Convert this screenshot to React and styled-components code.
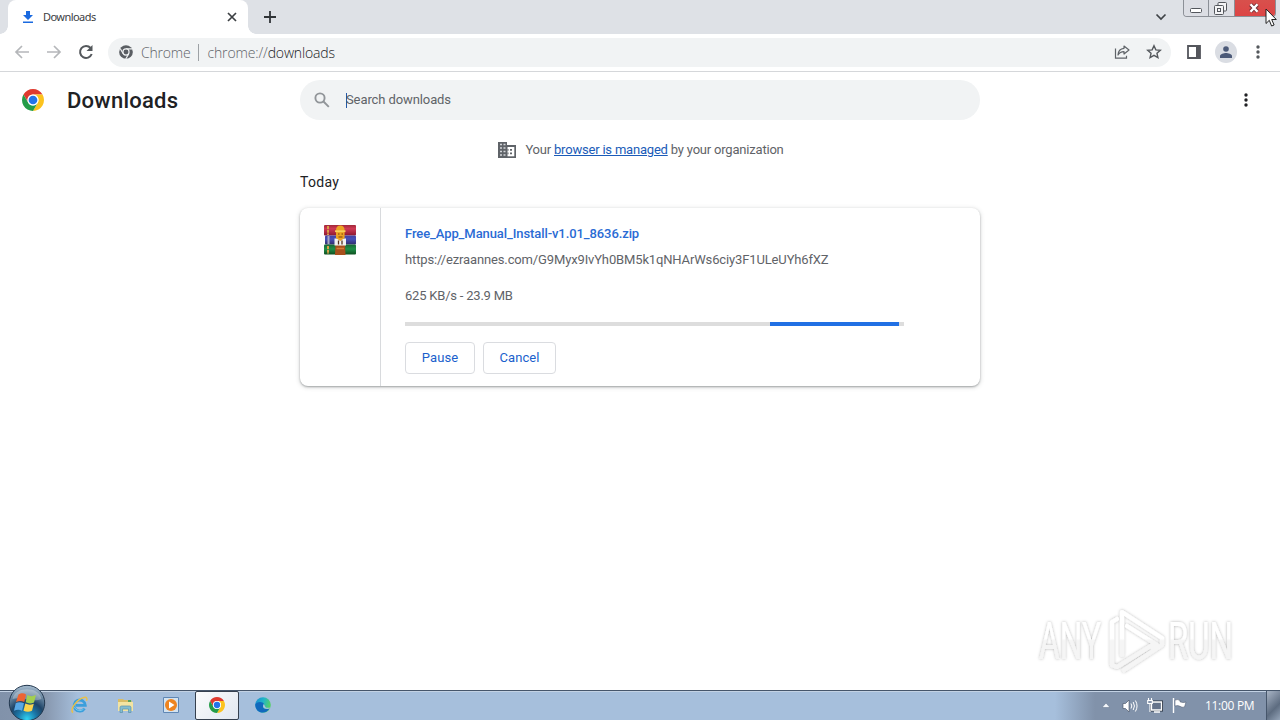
import React from "react";
import styled, { createGlobalStyle, css } from "styled-components";

const GlobalStyle = createGlobalStyle`
  * {
    box-sizing: border-box;
  }
  body {
    margin: 0;
    background: #fff;
    overflow: hidden;
    font-family: Roboto, sans-serif;
  }
  svg {
    display: block;
    flex: none;
  }
  p, h1, h2 {
    margin: 0;
  }
`;

const ChromeLogo = ({ size }) => (
  <svg width={size} height={size} viewBox="0 0 48 48">
    <path fill="#df3a2f" d="M3.22 12A24 24 0 0 1 44.78 12H24A12 12 0 0 0 13.61 30Z" />
    <path fill="#fcc31e" d="M44.78 12A24 24 0 0 1 24 48L34.39 30A12 12 0 0 0 24 12Z" />
    <path fill="#249c48" d="M24 48A24 24 0 0 1 3.22 12L13.61 30A12 12 0 0 0 34.39 30Z" />
    <circle cx="24" cy="24" r="12" fill="#fff" />
    <circle cx="24" cy="24" r="9.5" fill="#2474e8" />
  </svg>
);

const ChromeMono = () => (
  <svg width="14" height="14" viewBox="0 0 48 48">
    <circle cx="24" cy="24" r="23.5" fill="#5a5e63" />
    <path d="M24 13H46M14.5 30L4 12M33.5 30L23 48" stroke="#f1f3f4" strokeWidth="4" />
    <circle cx="24" cy="24" r="12.5" fill="#f1f3f4" />
    <circle cx="24" cy="24" r="8.5" fill="#5a5e63" />
  </svg>
);

const Dots = ({ color }) => (
  <svg width="6" height="16" viewBox="0 0 6 16" fill={color}>
    <circle cx="3" cy="3" r="1.7" />
    <circle cx="3" cy="8" r="1.7" />
    <circle cx="3" cy="13" r="1.7" />
  </svg>
);

const WinRarIcon = () => (
  <svg width="32" height="32" viewBox="0 0 32 32">
    <defs>
      <linearGradient id="red" x2="0" y2="1">
        <stop offset="0" stopColor="#a02838" />
        <stop offset=".35" stopColor="#d03a55" />
        <stop offset="1" stopColor="#8c1830" />
      </linearGradient>
      <linearGradient id="blue" x2="0" y2="1">
        <stop offset="0" stopColor="#4341a0" />
        <stop offset=".4" stopColor="#4650b8" />
        <stop offset="1" stopColor="#302c6c" />
      </linearGradient>
      <linearGradient id="green" x2="0" y2="1">
        <stop offset="0" stopColor="#186634" />
        <stop offset=".45" stopColor="#1f8f48" />
        <stop offset="1" stopColor="#0f5020" />
      </linearGradient>
    </defs>
    <rect y="1" width="32" height="10.5" rx="1" fill="url(#red)" />
    <rect x="1" y="11.5" width="31" height="9" rx="1" fill="url(#blue)" />
    <rect y="20.5" width="32" height="10" rx="1" fill="url(#green)" />
    <path d="M4 2V11M4 22V30" stroke="#d9a048" strokeWidth="2" strokeDasharray="3 .7" />
    <path d="M4.5 12V20" stroke="#a8a8c4" strokeWidth="2" />
    <path d="M11.500 20h9.500l.5 11h-10.500z" fill="#a8501d" />
    <path d="M10.500 14.500h11.500v7H10.500z" fill="#f2f2f2" />
    <path d="M12 14V6.500q0-5 4.300-5t4.300 5V14l-4.300 3z" fill="#eba323" />
    <path d="M11 7.200h10.500" stroke="#f8cf58" strokeWidth="1.800" />
    <path d="M14 10h1.500M17.500 10h1.500M14.500 13h4" stroke="#7a3c0a" strokeWidth="1" />
    <path d="M14.500 16.500v4M18 16.500v4" stroke="#55301c" strokeWidth="1.300" />
    <path d="M12.500 24.500h7.500" stroke="#d77c37" strokeWidth="1.500" />
  </svg>
);

const ShareIcon = () => (
  <svg width="16" height="16" viewBox="0 0 16 16" fill="none" stroke="#5f6368" strokeWidth="1.2">
    <path d="M1.500 4.500v9.700h11v-2.500" />
    <path d="M10 2l5 4-5 4V7.700C7.500 7.700 5.300 8.700 4 11 4.200 7.500 6 4.600 10 4.300z" strokeLinejoin="round" />
  </svg>
);

const BuildingIcon = () => (
  <svg width="18" height="16" viewBox="0 0 18 16">
    <path d="M0 0h9v3h9v13H0z" fill="#5f6368" />
    <path d="M2 2.500h2M5.500 2.500h2M2 6h2M5.500 6h2M2 9.500h2M5.500 9.500h2M2 13h2M5.500 13h2" stroke="#d4d6d9" strokeWidth="1.300" />
    <path d="M9.500 5h6.800v9.300H9.500z" fill="#fff" />
    <path d="M12 7h2v1.700h-2zM12 10.500h2v1.700h-2zM9.500 7h1v1.700h-1zM9.500 10.500h1v1.700h-1z" fill="#5f6368" />
  </svg>
);

const IeIcon = () => (
  <svg width="19" height="18" viewBox="0 0 19 18" fill="none">
    <path d="M14.500 12.500A5.600 5.600 0 1 1 15.300 9.300H6" stroke="#3b9fdc" strokeWidth="2.800" />
    <path d="M13.500 13A5.500 5.500 0 0 1 4.500 11" stroke="#7bccee" strokeWidth="1" />
    <path d="M3 16.500C-1 14 7 3 14 1.500c3-.600 3.500 1 2.500 3.200" stroke="#e8c04a" strokeWidth="1.500" />
  </svg>
);

const ExplorerIcon = () => (
  <svg width="17" height="17" viewBox="0 0 17 17">
    <path d="M1 4V2h5l1 1h7l1 2v9H1z" fill="#d9bd66" />
    <path d="M1 5h15v9H1z" fill="#f3e4a2" />
    <path d="M11 3h3v2h-3z" fill="#55a45f" />
    <path d="M3 15.500V10.500q0-1.500 1.500-1.500h8q1.500 0 1.500 1.500v5h-2.500V12h-6v3.500z" fill="#83bdcf" stroke="#5a91aa" strokeWidth=".7" />
  </svg>
);

const PlayerIcon = () => (
  <svg width="16" height="16" viewBox="0 0 16 16">
    <path d="M.5.5h15v15H.5z" fill="#d4e3f0" stroke="#5f87b5" />
    <circle cx="8" cy="8" r="6" fill="#ee8420" />
    <path d="M6 4.500L11.500 8 6 11.500z" fill="#fff" />
  </svg>
);

const EdgeIcon = () => (
  <svg width="16" height="16" viewBox="0 0 16 16">
    <defs>
      <linearGradient id="edge" x2="1" y2=".3">
        <stop offset="0" stopColor="#1a8ad2" />
        <stop offset=".55" stopColor="#22b5c8" />
        <stop offset="1" stopColor="#55cf68" />
      </linearGradient>
    </defs>
    <circle cx="8" cy="8" r="7.800" fill="url(#edge)" />
    <path d="M.3 7.500C1 4.500 8.500 4 9 7.500c.2 1-1.500 1.500-.8 3 .7 1.600 4 2 6.300.8C12 17.500.5 17.500.3 7.500z" fill="#1169bd" />
    <path d="M8.800 7c-1 1-1.300 3.500 1 4.500 1.800.7 3.800.4 5 0l.7-1c-3 .8-5.300.3-5.600-1.500z" fill="#a9c1dd" />
  </svg>
);

const StartOrb = () => (
  <svg width="38" height="38" viewBox="0 0 38 38">
    <defs>
      <radialGradient id="orb" cx=".5" cy=".95" r=".9">
        <stop offset="0" stopColor="#2fd3f3" />
        <stop offset=".3" stopColor="#1b77a8" />
        <stop offset=".55" stopColor="#1e4468" />
        <stop offset="1" stopColor="#9db4c8" />
      </radialGradient>
    </defs>
    <circle cx="19" cy="19" r="17.700" fill="url(#orb)" stroke="#23384f" strokeWidth="1" />
    <path d="M4.500 15C7 2 31 2 33.500 15 24 19 14 12 4.500 15z" fill="#fff" opacity=".3" />
    <path d="M10.500 10.500c3-2 5.500-1.500 7.500 0L16.300 18c-3-1.500-5.300-1.400-8.300 0z" fill="#ee6432" />
    <path d="M19.300 11c3 1.500 5.500 1.500 8.700 0l-2 7.500c-3 1.300-5.500 1.200-8.300-.200z" fill="#a3cf50" />
    <path d="M7.700 19.300c3-1.500 5.500-1.300 8.300 0l-2 7.500c-2.700-1.500-5-1.400-8 0z" fill="#58a7e5" />
    <path d="M17.300 19.600c3 1.400 5.300 1.500 8.500.1L24 26.800c-3 1.500-5.700 1.300-8.500-.100z" fill="#fbd34b" />
  </svg>
);

const Watermark = () => (
  <svg width="240" height="76" viewBox="0 0 240 76">
    <defs>
      <linearGradient id="wm" x2="0" y2="76" gradientUnits="userSpaceOnUse">
        <stop offset=".44" stopColor="#fff" />
        <stop offset=".47" stopColor="#f5f5f5" />
      </linearGradient>
      <filter id="glow" x="-10%" y="-20%" width="120%" height="140%">
        <feDropShadow dx="0" dy="0" stdDeviation="1.7" floodColor="#000" floodOpacity=".3" />
      </filter>
    </defs>
    <g filter="url(#glow)" fill="url(#wm)">
      <text x="10" y="54" fontFamily="Roboto, sans-serif" fontSize="51" textLength="62" lengthAdjust="spacingAndGlyphs">ANY</text>
      <text x="139" y="54" fontFamily="Roboto, sans-serif" fontSize="51" textLength="65" lengthAdjust="spacingAndGlyphs">RUN</text>
      <g fill="none" stroke="url(#wm)" strokeWidth="4.200" strokeLinejoin="round" strokeLinecap="round">
        <path d="M93 50V7l40 26M98 21l30 19-5 3M133 33v7L95 65" />
        <path d="M88 14l-5 3v43l5 2 37-23" />
      </g>
    </g>
  </svg>
);

const App = () => {
  return (
    <Screen>
      <GlobalStyle />
      <TabStrip>
        <Tab>
          <svg width="12" height="14" viewBox="0 0 12 14" fill="#1a6ae0">
            <path d="M4 1h4v4h3L6 10 1 5h3zM1 11.500h10V13H1z" />
          </svg>
          <TabTitle>Downloads</TabTitle>
          <svg width="10" height="10" viewBox="0 0 10 10" stroke="#3c4043" strokeWidth="1.7">
            <path d="M1 1l8 8M9 1L1 9" />
          </svg>
        </Tab>
        <NewTab>
          <svg width="12" height="12" viewBox="0 0 12 12" stroke="#303438" strokeWidth="1.8">
            <path d="M6 0v12M0 6h12" />
          </svg>
        </NewTab>
        <TabSearch>
          <svg width="12" height="8" viewBox="0 0 12 8" fill="none" stroke="#3f4347" strokeWidth="1.7">
            <path d="M1.500 1.500L6 6l4.500-4.500" />
          </svg>
        </TabSearch>
        <WindowControls>
          <WindowButton $width={24}>
            <svg width="12" height="5" viewBox="0 0 12 5">
              <rect x=".5" y=".5" width="11" height="4" rx="1" fill="#fff" stroke="#53565c" />
            </svg>
          </WindowButton>
          <WindowButton $width={26}>
            <svg width="13" height="13" viewBox="0 0 13 13" fill="#f4f4f6" stroke="#53565c">
              <rect x="4" y=".5" width="8.500" height="8.500" rx="1" />
              <rect x=".5" y="3.500" width="9" height="9" rx="1" />
              <rect x="3.500" y="6.500" width="3" height="3" />
            </svg>
          </WindowButton>
          <WindowButton $width={41} $close>
            <svg width="12" height="10" viewBox="0 0 12 10">
              <path d="M2.500 1.500l7 7M9.500 1.500l-7 7" stroke="#6b3036" strokeWidth="4" />
              <path d="M2.500 1.200l7 7.600M9.500 1.200l-7 7.600" stroke="#fff" strokeWidth="2.400" />
            </svg>
          </WindowButton>
        </WindowControls>
      </TabStrip>

      <Toolbar>
        <NavIcons>
          <svg width="16" height="14" viewBox="0 0 16 14" fill="none" stroke="#b5b7ba" strokeWidth="1.7">
            <path d="M15 7H2M8 1L2 7l6 6" />
          </svg>
          <svg width="16" height="14" viewBox="0 0 16 14" fill="none" stroke="#b5b7ba" strokeWidth="1.7">
            <path d="M1 7h13M8 1l6 6-6 6" />
          </svg>
          <svg width="16" height="16" viewBox="0 0 16 16" fill="none" stroke="#54585c" strokeWidth="2">
            <path d="M13.700 10A6 6 0 1 1 12.600 4" />
            <path d="M14.500 1v6h-6z" fill="#54585c" stroke="none" />
          </svg>
        </NavIcons>
        <AddressBar>
          <ChromeMono />
          <SiteName>Chrome</SiteName>
          <Url>
            chrome://<span>downloads</span>
          </Url>
          <AddressActions>
            <ShareIcon />
            <svg width="16" height="16" viewBox="0 0 16 16" fill="none" stroke="#54585c" strokeWidth="1.400">
              <path d="M8 1.800l1.850 4.100 4.450.45-3.350 2.950.98 4.400L8 11.400l-3.930 2.300.98-4.400L1.700 6.350l4.450-.45z" />
            </svg>
          </AddressActions>
        </AddressBar>
        <ToolbarActions>
          <svg width="14" height="14" viewBox="0 0 14 14">
            <path d="M1 1h12v12H1z" fill="none" stroke="#54565c" strokeWidth="1.800" />
            <path d="M9 1h4v12H9z" fill="#54565c" />
          </svg>
          <Avatar>
            <svg width="12" height="12" viewBox="0 0 12 12" fill="#4c5a78">
              <circle cx="6" cy="3" r="2.800" />
              <path d="M0 12v-2c0-2 4-3 6-3s6 1 6 3v2z" />
            </svg>
          </Avatar>
          <Dots color="#54585c" />
        </ToolbarActions>
      </Toolbar>

      <Page>
        <PageHeader>
          <Brand>
            <ChromeLogo size={22} />
            <h1>Downloads</h1>
          </Brand>
          <SearchField>
            <svg width="16" height="16" viewBox="0 0 16 16" fill="none" stroke="#919599" strokeWidth="1.900">
              <circle cx="6" cy="6" r="4.600" />
              <path d="M9.500 9.500l5.300 5.300" />
            </svg>
            <Caret />
            <Placeholder>Search downloads</Placeholder>
          </SearchField>
          <MoreButton>
            <Dots color="#202124" />
          </MoreButton>
        </PageHeader>

        <Managed>
          <BuildingIcon />
          <p>
            Your <a>browser is managed</a> by your organization
          </p>
        </Managed>

        <Content>
          <DateHeading>Today</DateHeading>
          <DownloadCard>
            <FileIcon>
              <WinRarIcon />
            </FileIcon>
            <Details>
              <FileName>Free_App_Manual_Install-v1.01_8636.zip</FileName>
              <FileUrl>https://ezraannes.com/G9Myx9IvYh0BM5k1qNHArWs6ciy3F1ULeUYh6fXZ</FileUrl>
              <Speed>625 KB/s - 23.9 MB</Speed>
              <Progress>
                <ProgressBar />
              </Progress>
              <Actions>
                <ActionButton $width={70}>Pause</ActionButton>
                <ActionButton $width={73}>Cancel</ActionButton>
              </Actions>
            </Details>
          </DownloadCard>
        </Content>
      </Page>

      <Taskbar>
        <Start>
          <StartOrb />
        </Start>
        <TaskItem>
          <IeIcon />
        </TaskItem>
        <TaskItem>
          <ExplorerIcon />
        </TaskItem>
        <TaskItem>
          <PlayerIcon />
        </TaskItem>
        <TaskItem $active>
          <ChromeLogo size={16} />
        </TaskItem>
        <TaskItem>
          <EdgeIcon />
        </TaskItem>
        <Tray>
          <svg width="8" height="5" viewBox="0 0 8 5">
            <path d="M4 0l4 4.500H0z" fill="#f4f7fb" stroke="#5d6c84" strokeWidth=".5" />
          </svg>
          <svg width="16" height="14" viewBox="0 0 16 14" fill="none" stroke="#fff">
            <path d="M1 4.500h2.500L7 1v12L3.500 9.500H1z" fill="#fff" stroke="#3f4c60" strokeWidth=".6" />
            <path d="M9 4.500q1.600 2.500 0 5M11.200 3q2.500 4 0 8M13.400 1.500q3.300 5.500 0 11" />
          </svg>
          <svg width="16" height="15" viewBox="0 0 16 15">
            <path d="M4.500 4h10v8h-10z" fill="#66748b" stroke="#26303f" strokeWidth="3" />
            <path d="M4.500 4h10v8h-10zM7 14h6" fill="#66748b" stroke="#fff" strokeWidth="1.300" />
            <path d="M1.500 0v2M4.500 0v2M.7 2.500h4.600v3H.7zM3 6v8" fill="#8593aa" stroke="#fff" strokeWidth="1.100" />
          </svg>
          <svg width="15" height="15" viewBox="0 0 15 15">
            <path d="M1.500 0v15" stroke="#fff" strokeWidth="1.400" />
            <path d="M3 2q3-1 5 .5v1.300q3 1.500 6 .2l-1.500 5Q10 9.800 8 8.300 6 7 3 8z" fill="#fff" stroke="#465268" strokeWidth=".5" />
          </svg>
        </Tray>
        <Clock>11:00 PM</Clock>
        <ShowDesktop />
      </Taskbar>

      <WatermarkLayer>
        <Watermark />
      </WatermarkLayer>
      <Cursor>
        <svg width="13" height="20" viewBox="0 0 13 20">
          <path d="M1 1v14.500l3.300-3.200 2.300 5.700 2.500-1-2.400-5.500h4.600z" fill="#fff" stroke="#222" />
        </svg>
      </Cursor>
    </Screen>
  );
};

const Screen = styled.div`
  position: relative;
  display: flex;
  flex-direction: column;
  width: 1280px;
  height: 720px;
  overflow: hidden;
  background: #fff;
`;

const TabStrip = styled.div`
  display: flex;
  height: 34px;
  padding: 0 4px 0 8px;
  background: #dee1e6;
`;

const Tab = styled.div`
  position: relative;
  display: flex;
  align-items: center;
  width: 240px;
  padding: 0 11px 1px 14px;
  border-radius: 8px 8px 0 0;
  background: #fff;
  &::before,
  &::after {
    content: "";
    position: absolute;
    bottom: 0;
    width: 8px;
    height: 8px;
  }
  &::before {
    left: -8px;
    background: radial-gradient(circle at 0 0, #dee1e6 7.5px, #fff 8px);
  }
  &::after {
    right: -8px;
    background: radial-gradient(circle at 100% 0, #dee1e6 7.5px, #fff 8px);
  }
`;

const TabTitle = styled.span`
  flex: 1;
  padding-left: 9px;
  font-family: "Noto Sans", sans-serif;
  font-size: 11px;
  letter-spacing: -0.55px;
  color: #3c4043;
`;

const NewTab = styled.div`
  display: flex;
  align-items: center;
  padding-left: 16px;
`;

const TabSearch = styled.div`
  display: flex;
  align-items: center;
  margin-left: auto;
  padding-right: 16px;
`;

const WindowControls = styled.div`
  display: flex;
  height: 17px;
  border: 1px solid #8c9097;
  border-top: 0;
  border-radius: 0 0 4px 4px;
  overflow: hidden;
`;

const WindowButton = styled.div`
  display: flex;
  align-items: center;
  justify-content: center;
  width: ${(props) => props.$width}px;
  background: #dcdee4;
  & + & {
    border-left: 1px solid #8c9097;
  }
  &:first-child {
    padding-top: 4px;
  }
  &:nth-child(2) {
    padding-right: 3px;
  }
  ${(props) =>
    props.$close &&
    css`
      padding-right: 2px;
      background: linear-gradient(#d8504c, #dc4545);
    `}
`;

const Toolbar = styled.div`
  display: flex;
  align-items: center;
  height: 38px;
  padding-bottom: 1px;
  border-bottom: 1px solid #d5d7da;
`;

const NavIcons = styled.div`
  display: flex;
  align-items: center;
  gap: 16px;
  width: 108px;
  padding-left: 14px;
`;

const AddressBar = styled.div`
  display: flex;
  align-items: center;
  width: 1063px;
  height: 29px;
  padding: 0 9px 0 11px;
  border-radius: 15px;
  background: #f1f3f4;
  font-family: "Open Sans", sans-serif;
  font-size: 14px;
  color: #5f6368;
`;

const SiteName = styled.span`
  padding: 1px 8px 0 8px;
  border-right: 1px solid #9da1a5;
  line-height: 16px;
  font-weight: 300;
  letter-spacing: -0.2px;
`;

const Url = styled.span`
  padding: 1px 0 0 8px;
  line-height: 16px;
  font-weight: 300;
  letter-spacing: -0.15px;
  span {
    color: #202124;
  }
`;

const AddressActions = styled.div`
  display: flex;
  gap: 16px;
  margin-left: auto;
`;

const ToolbarActions = styled.div`
  display: flex;
  align-items: center;
  gap: 14px;
  padding-left: 16px;
  & > :last-child {
    margin-left: 4px;
  }
`;

const Avatar = styled.div`
  display: flex;
  align-items: center;
  justify-content: center;
  width: 22px;
  height: 22px;
  border-radius: 50%;
  background: #dadde3;
`;

const Page = styled.main`
  flex: 1;
`;

const PageHeader = styled.header`
  display: grid;
  grid-template-columns: 300px 680px 1fr;
  align-items: center;
  height: 56px;
`;

const Brand = styled.div`
  display: flex;
  align-items: center;
  gap: 23px;
  padding-left: 22px;
  h1 {
    font-size: 22px;
    font-weight: 500;
    letter-spacing: 0.25px;
    color: #202124;
  }
`;

const SearchField = styled.div`
  display: flex;
  align-items: center;
  height: 40px;
  padding-left: 14px;
  border-radius: 20px;
  background: #f1f3f4;
  font-size: 13px;
  color: #5f6368;
`;

const Caret = styled.i`
  width: 1px;
  height: 15px;
  margin-left: 16px;
  background: #2459a8;
`;

const Placeholder = styled.span`
  margin-left: -1px;
  padding-bottom: 2px;
  letter-spacing: -0.1px;
`;

const MoreButton = styled.div`
  display: flex;
  justify-content: flex-end;
  padding-right: 31px;
`;

const Managed = styled.div`
  display: flex;
  align-items: center;
  justify-content: center;
  gap: 9px;
  height: 44px;
  padding-left: 2px;
  font-size: 13px;
  letter-spacing: -0.2px;
  color: #5f6368;
  p {
    padding-bottom: 2px;
  }
  a {
    color: #1a5bb8;
    text-decoration: underline;
  }
`;

const Content = styled.section`
  width: 680px;
  margin: 0 auto;
`;

const DateHeading = styled.h2`
  height: 36px;
  font-size: 14px;
  font-weight: 400;
  line-height: 20px;
  letter-spacing: 0.3px;
  color: #202124;
`;

const DownloadCard = styled.article`
  display: flex;
  height: 178px;
  border-radius: 8px;
  background: #fff;
  box-shadow: 0 1px 2px rgba(60, 64, 67, 0.4), 0 1px 4px 1px rgba(60, 64, 67, 0.15);
`;

const FileIcon = styled.div`
  display: flex;
  justify-content: center;
  width: 81px;
  padding-top: 16px;
  border-right: 1px solid #d8dadd;
`;

const Details = styled.div`
  width: 523px;
  padding: 16px 0 0 24px;
  font-size: 13px;
  color: #5f6368;
`;

const FileName = styled.p`
  font-weight: 500;
  line-height: 20px;
  letter-spacing: -0.09px;
  color: #2a6bd4;
`;

const FileUrl = styled.p`
  margin-top: 6px;
  line-height: 20px;
  letter-spacing: -0.14px;
`;

const Speed = styled.p`
  margin-top: 16px;
  line-height: 20px;
  letter-spacing: -0.21px;
`;

const Progress = styled.div`
  height: 4px;
  margin-top: 16px;
  background: #ddd;
`;

const ProgressBar = styled.div`
  width: 129px;
  height: 4px;
  margin-left: 365px;
  background: #2170e4;
`;

const Actions = styled.div`
  display: flex;
  gap: 8px;
  margin-top: 16px;
`;

const ActionButton = styled.button`
  width: ${(props) => props.$width}px;
  height: 32px;
  padding: 0 0 2px;
  border: 1px solid #dadce0;
  border-radius: 4px;
  background: #fff;
  font-family: Roboto, sans-serif;
  font-size: 13px;
  font-weight: 400;
  letter-spacing: 0.1px;
  color: #1a5fcc;
`;

const Taskbar = styled.footer`
  display: flex;
  align-items: center;
  height: 30px;
  border-top: 1px solid #46566b;
  box-shadow: inset 0 1px #c3d2e4;
  background: linear-gradient(90deg, #8192aa, #8797ae 45px, #a6bfdc 78px, #a6bfdc 1055px, #8192aa 1095px);
`;

const Start = styled.div`
  width: 56px;
  padding-left: 8px;
  margin: -10px 0 -5px;
`;

const TaskItem = styled.div`
  display: flex;
  align-items: center;
  justify-content: center;
  width: 46px;
  height: 29px;
  padding-bottom: 1px;
  ${(props) =>
    props.$active &&
    css`
      width: 44px;
      margin: 0 1px;
      border: 1px solid #35404f;
      border-radius: 2px;
      background: linear-gradient(135deg, #fafbfc, #e1e7f0);
    `}
`;

const Tray = styled.div`
  display: flex;
  align-items: center;
  gap: 9px;
  margin-left: auto;
  & > :first-child {
    margin-right: 3px;
  }
`;

const Clock = styled.div`
  width: 79px;
  padding-left: 18px;
  font-family: "Open Sans", sans-serif;
  font-size: 12px;
  letter-spacing: -0.3px;
  white-space: nowrap;
  color: #fff;
`;

const ShowDesktop = styled.div`
  width: 14px;
  height: 29px;
  border-left: 1px solid #46566b;
  background: linear-gradient(135deg, #a8b4c5, #5d6c80 60%, #94a4b8);
`;

const WatermarkLayer = styled.div`
  position: absolute;
  top: 605px;
  left: 1029px;
`;

const Cursor = styled.div`
  position: absolute;
  top: 8px;
  left: 1265px;
`;

export default App;
